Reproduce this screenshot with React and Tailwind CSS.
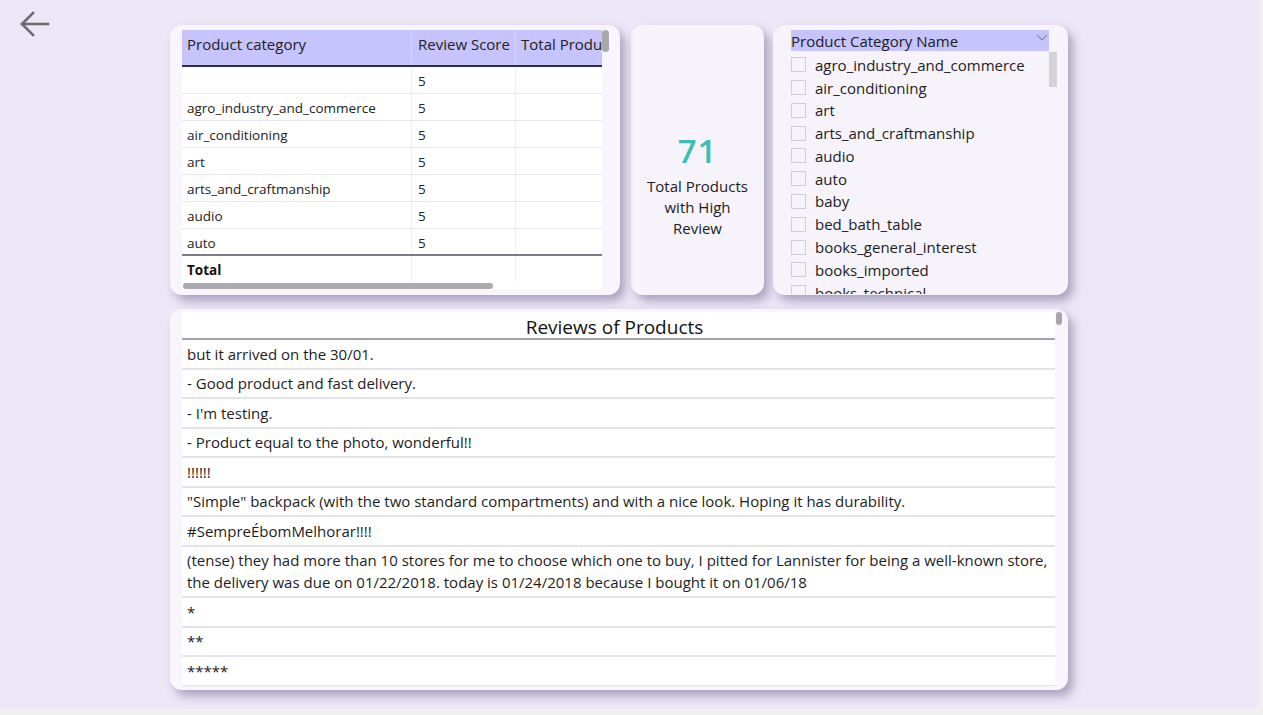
import React from "react";

const font = { fontFamily: '"Open Sans", "Noto Sans", sans-serif' };

const tableRows = [
  "",
  "agro_industry_and_commerce",
  "air_conditioning",
  "art",
  "arts_and_craftmanship",
  "audio",
  "auto",
];

const categories = [
  "agro_industry_and_commerce",
  "air_conditioning",
  "art",
  "arts_and_craftmanship",
  "audio",
  "auto",
  "baby",
  "bed_bath_table",
  "books_general_interest",
  "books_imported",
  "books_technical",
];

const reviews = [
  ["but it arrived on the 30/01."],
  ["- Good product and fast delivery."],
  ["- I'm testing."],
  ["- Product equal to the photo, wonderful!!"],
  ["!!!!!!"],
  ['"Simple" backpack (with the two standard compartments) and with a nice look. Hoping it has durability.'],
  ["#SempreÉbomMelhorar!!!!"],
  [
    "(tense) they had more than 10 stores for me to choose which one to buy, I pitted for Lannister for being a well-known store,",
    "the delivery was due on 01/22/2018. today is 01/24/2018 because I bought it on 01/06/18",
  ],
  ["*"],
  ["**"],
  ["*****"],
];

function BackArrow() {
  return (
    <svg width="32" height="32" viewBox="0 0 32 32" fill="none">
      <path
        d="M30 16H4M15 5L4 16l11 11"
        stroke="#6b6b6b"
        strokeWidth="2.6"
        strokeLinecap="square"
      />
    </svg>
  );
}

function ProductTable() {
  return (
    <div className="relative w-[450px] h-[270px] rounded-[12px] bg-[#f8f6fc] shadow-[5px_6px_10px_rgba(90,80,130,0.45)] pl-[12px] pr-[18px] pt-[5px]">
      <div className="bg-white w-[420px] h-[259px] overflow-hidden">
        <div className="flex h-[37px] bg-[#c6c3fd] border-b-2 border-[#2f2f45] text-[15px] text-[#222]">
          <div className="w-[229px] pl-[5px] pt-[3px]">Product category</div>
          <div className="w-[104px] pl-[6px] pt-[3px] border-l border-[#d8d6fc]">Review Score</div>
          <div className="flex-1 pl-[5px] pt-[3px] border-l border-[#d8d6fc] whitespace-nowrap overflow-hidden">
            Total Products
          </div>
        </div>
        {tableRows.map((r, i) => (
          <div
            key={i}
            className={`flex h-[27px] text-[13.5px] text-[#222] ${
              i === tableRows.length - 1 ? "border-b-2 border-[#7c7c88]" : "border-b border-[#e6e6ea]"
            }`}
          >
            <div className="w-[229px] pl-[5px] pt-[4px]">{r}</div>
            <div className="w-[104px] pl-[6px] pt-[4px] border-l border-[#efeff2]">5</div>
            <div className="flex-1 border-l border-[#efeff2]"></div>
          </div>
        ))}
        <div className="flex h-[26px] text-[13.5px] font-bold text-[#111]">
          <div className="w-[229px] pl-[5px] pt-[4px]">Total</div>
          <div className="w-[104px] border-l border-[#efeff2]"></div>
          <div className="flex-1 border-l border-[#efeff2]"></div>
        </div>
      </div>
      <div className="absolute left-[13px] top-[258px] w-[310px] h-[6px] rounded-full bg-[#acaaae]"></div>
      <div className="absolute left-[432px] top-[5px] w-[7px] h-[22px] rounded-full bg-[#a8a8ac]"></div>
    </div>
  );
}

function KpiCard() {
  return (
    <div className="w-[133px] h-[270px] rounded-[12px] bg-[#f6f3fb] shadow-[5px_6px_10px_rgba(90,80,130,0.45)] flex flex-col items-center pt-[106px]">
      <div className="text-[33px] leading-[40px] font-semibold text-[#3bbdb8] tracking-wide">71</div>
      <div className="text-[15px] leading-[21px] text-[#1d1d1d] text-center mt-[5px]">
        Total Products
        <br />
        with High
        <br />
        Review
      </div>
    </div>
  );
}

function Slicer() {
  return (
    <div className="relative w-[295px] h-[270px] rounded-[12px] bg-[#f6f3fb] shadow-[5px_6px_10px_rgba(90,80,130,0.45)] pl-[18px] pt-[5px] overflow-hidden">
      <div className="flex items-center justify-between w-[258px] h-[21px] bg-[#c6c3fd] text-[15px] text-[#1d1d1d]">
        <span className="leading-[21px] pt-[1px]">Product Category Name</span>
        <svg width="12" height="8" viewBox="0 0 12 8" className="mr-[1px] mb-[6px]">
          <path d="M1 1l5 5 5-5" stroke="#8a8a9a" strokeWidth="1.2" fill="none" />
        </svg>
      </div>
      <div className="h-[243px] pt-[2.5px] overflow-hidden">
        {categories.map((c) => (
          <div key={c} className="flex items-center h-[22.78px] text-[15px] text-[#1d1d1d]">
            <div className="w-[15px] h-[15px] border border-[#cfcfcf] bg-[#f6f3fb]"></div>
            <span className="ml-[9px] leading-[20px]">{c}</span>
          </div>
        ))}
      </div>
      <div className="absolute left-[276px] top-[27px] w-[8px] h-[35px] bg-[#d3d3d6]"></div>
    </div>
  );
}

function Reviews() {
  return (
    <div className="relative w-[898px] h-[381px] rounded-[12px] bg-[#f8f6fc] shadow-[5px_6px_10px_rgba(90,80,130,0.45)] pl-[12px] pr-[13px] pt-[3px]">
      <div className="bg-white w-[873px] h-[374px] overflow-hidden">
        <div className="h-[28px] border-b-2 border-[#a3a3b2] text-center text-[19px] leading-[24px] pt-[3px] pr-[8px] text-[#111] overflow-hidden">
          Reviews of Products
        </div>
        {reviews.map((lines, i) => (
          <div
            key={i}
            className="border-b-2 border-[#e4e3ea] px-[5px] py-[2.75px] text-[15px] leading-[22px] text-[#1d1d1d]"
          >
            {lines.map((l, j) => (
              <div key={j}>{l}</div>
            ))}
          </div>
        ))}
      </div>
      <div className="absolute left-[886px] top-[3px] w-[6px] h-[13px] rounded-full bg-[#a8a8ac]"></div>
    </div>
  );
}

export default function App() {
  return (
    <div className="w-[1263px] h-[715px] bg-[#f0f0f0] overflow-hidden" style={font}>
      <div className="relative w-[1260px] h-[709px] bg-[#ede6f6] rounded-br-[8px] flex flex-col">
        <div className="absolute left-[18px] top-[8px]">
          <BackArrow />
        </div>
        <div className="flex gap-[10px] pl-[170px] pt-[25px]">
          <ProductTable />
          <div className="ml-[1px]">
            <KpiCard />
          </div>
          <div className="ml-[-1px]">
            <Slicer />
          </div>
        </div>
        <div className="pl-[170px] pt-[14px]">
          <Reviews />
        </div>
      </div>
    </div>
  );
}
